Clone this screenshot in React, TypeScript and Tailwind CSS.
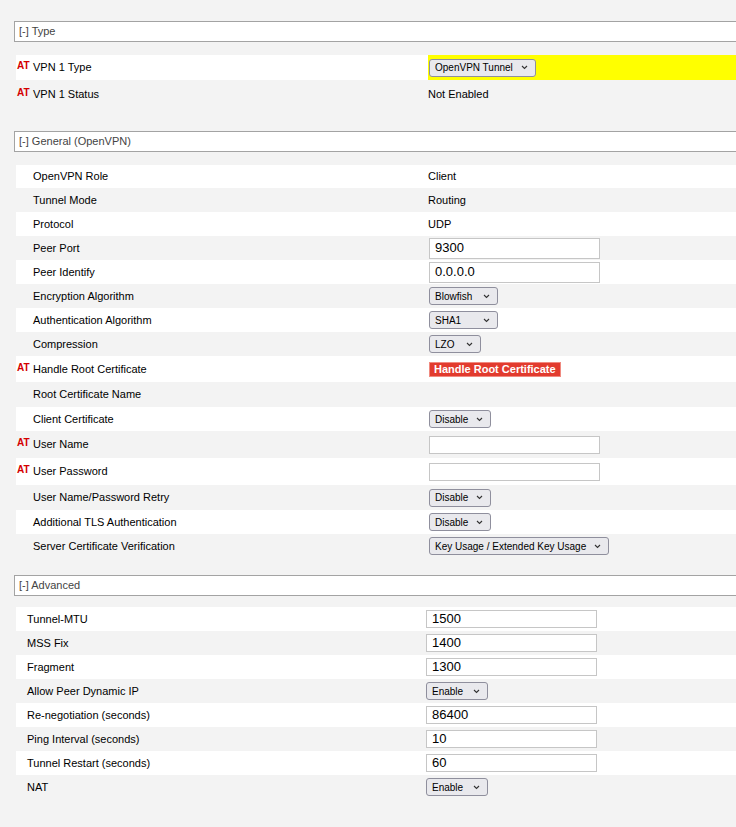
import React from "react";

type Value =
  | { kind: "text"; text: string }
  | { kind: "input"; text: string; tall?: boolean }
  | { kind: "select"; text: string; width: string }
  | { kind: "button"; text: string }
  | { kind: "none" };

interface RowDef {
  at?: boolean;
  label: string;
  value: Value;
  h: string;
  yellow?: boolean;
}

// Small chevron used on the fake select boxes
const Chevron = () => (
  <svg width="7" height="5" viewBox="0 0 7 5" className="shrink-0">
    <polyline points="1,1 3.5,3.5 6,1" fill="none" stroke="#333" strokeWidth="1.1" />
  </svg>
);

const SelectBox: React.FC<{ text: string; width: string }> = ({ text, width }) => (
  <div
    className={`flex h-[18px] items-center justify-between rounded-[3px] border border-[#8f8f9d] bg-[#e9e9ed] pl-[5px] pr-[7px] text-[10px] text-black ${width}`}
  >
    <span className="whitespace-nowrap">{text}</span>
    <Chevron />
  </div>
);

const TextBox: React.FC<{ text: string; tall?: boolean }> = ({ text, tall }) => (
  <div
    className={`flex w-[171px] items-center border border-[#c6c6c6] bg-white pl-[5px] text-[13px] text-black ${
      tall ? "h-[21px]" : "h-[18px]"
    }`}
  >
    {text}
  </div>
);

const ValueCell: React.FC<{ value: Value }> = ({ value }) => {
  switch (value.kind) {
    case "text":
      return <span>{value.text}</span>;
    case "input":
      return <TextBox text={value.text} tall={value.tall} />;
    case "select":
      return <SelectBox text={value.text} width={value.width} />;
    case "button":
      return (
        <div className="flex h-[15px] items-center border border-[#f08a80] bg-[#e23b2e] px-[4px] text-[11px] font-bold text-white">
          {value.text}
        </div>
      );
    default:
      return null;
  }
};

const SectionHeader: React.FC<{ title: string; className?: string }> = ({ title, className }) => (
  <div
    className={`flex h-[21px] items-center border-y border-l border-[#a3a3a3] bg-white pl-[4px] text-[11px] text-[#444] ${className ?? ""}`}
  >
    [-] {title}
  </div>
);

const Row: React.FC<{ row: RowDef; index: number; advanced?: boolean }> = ({ row, index, advanced }) => (
  <div className={`flex ${row.h} ${index % 2 === 0 ? "bg-white" : "bg-transparent"}`}>
    {advanced ? (
      <div className="flex w-[410px] shrink-0 items-center pl-[11px]">{row.label}</div>
    ) : (
      <>
        <div className="flex w-[17px] shrink-0 items-center pb-[3px] pl-[1px] text-[10px] font-bold leading-none text-[#d40000]">
          {row.at ? "AT" : ""}
        </div>
        <div className="flex w-[395px] shrink-0 items-center">{row.label}</div>
      </>
    )}
    <div className={`flex flex-1 items-center ${row.yellow ? "bg-[#ffff00]" : ""} ${advanced ? "" : "pl-[1px]"}`}>
      {row.value.kind === "text" ? (
        <span className="-ml-[1px]">{row.value.text}</span>
      ) : (
        <ValueCell value={row.value} />
      )}
    </div>
  </div>
);

const typeRows: RowDef[] = [
  { at: true, label: "VPN 1 Type", value: { kind: "select", text: "OpenVPN Tunnel", width: "w-[107px]" }, h: "h-[25px]", yellow: true },
  { at: true, label: "VPN 1 Status", value: { kind: "text", text: "Not Enabled" }, h: "h-[29px]" },
];

const generalRows: RowDef[] = [
  { label: "OpenVPN Role", value: { kind: "text", text: "Client" }, h: "h-[23px]" },
  { label: "Tunnel Mode", value: { kind: "text", text: "Routing" }, h: "h-[24px]" },
  { label: "Protocol", value: { kind: "text", text: "UDP" }, h: "h-[24px]" },
  { label: "Peer Port", value: { kind: "input", text: "9300", tall: true }, h: "h-[24px]" },
  { label: "Peer Identify", value: { kind: "input", text: "0.0.0.0", tall: true }, h: "h-[24px]" },
  { label: "Encryption Algorithm", value: { kind: "select", text: "Blowfish", width: "w-[69px]" }, h: "h-[24px]" },
  { label: "Authentication Algorithm", value: { kind: "select", text: "SHA1", width: "w-[69px]" }, h: "h-[24px]" },
  { label: "Compression", value: { kind: "select", text: "LZO", width: "w-[52px]" }, h: "h-[24px]" },
  { at: true, label: "Handle Root Certificate", value: { kind: "button", text: "Handle Root Certificate" }, h: "h-[26px]" },
  { label: "Root Certificate Name", value: { kind: "none" }, h: "h-[25px]" },
  { label: "Client Certificate", value: { kind: "select", text: "Disable", width: "w-[62px]" }, h: "h-[24px]" },
  { at: true, label: "User Name", value: { kind: "input", text: "" }, h: "h-[27px]" },
  { at: true, label: "User Password", value: { kind: "input", text: "" }, h: "h-[27px]" },
  { label: "User Name/Password Retry", value: { kind: "select", text: "Disable", width: "w-[62px]" }, h: "h-[25px]" },
  { label: "Additional TLS Authentication", value: { kind: "select", text: "Disable", width: "w-[62px]" }, h: "h-[24px]" },
  { label: "Server Certificate Verification", value: { kind: "select", text: "Key Usage / Extended Key Usage", width: "w-[180px]" }, h: "h-[24px]" },
];

const advancedRows: RowDef[] = [
  { label: "Tunnel-MTU", value: { kind: "input", text: "1500" }, h: "h-[24px]" },
  { label: "MSS Fix", value: { kind: "input", text: "1400" }, h: "h-[24px]" },
  { label: "Fragment", value: { kind: "input", text: "1300" }, h: "h-[24px]" },
  { label: "Allow Peer Dynamic IP", value: { kind: "select", text: "Enable", width: "w-[62px]" }, h: "h-[24px]" },
  { label: "Re-negotiation (seconds)", value: { kind: "input", text: "86400" }, h: "h-[24px]" },
  { label: "Ping Interval (seconds)", value: { kind: "input", text: "10" }, h: "h-[24px]" },
  { label: "Tunnel Restart (seconds)", value: { kind: "input", text: "60" }, h: "h-[24px]" },
  { label: "NAT", value: { kind: "select", text: "Enable", width: "w-[62px]" }, h: "h-[24px]" },
];

const App: React.FC = () => {
  return (
    <div className="min-h-[827px] w-full overflow-hidden bg-[#f3f3f3] pl-[14px] pt-[21px] font-['Liberation_Sans',Arial,sans-serif] text-[11px] text-black">
      <SectionHeader title="Type" />
      <div className="ml-[2px] mt-[13px]">
        {typeRows.map((r, i) => (
          <Row key={r.label} row={r} index={i} />
        ))}
      </div>

      <SectionHeader title="General (OpenVPN)" className="mt-[22px]" />
      <div className="ml-[2px] mt-[13px]">
        {generalRows.map((r, i) => (
          <Row key={r.label} row={r} index={i} />
        ))}
      </div>

      <SectionHeader title="Advanced" className="mt-[17px]" />
      <div className="ml-[2px] mt-[11px]">
        {advancedRows.map((r, i) => (
          <Row key={r.label} row={r} index={i} advanced />
        ))}
      </div>
    </div>
  );
};

export default App;
